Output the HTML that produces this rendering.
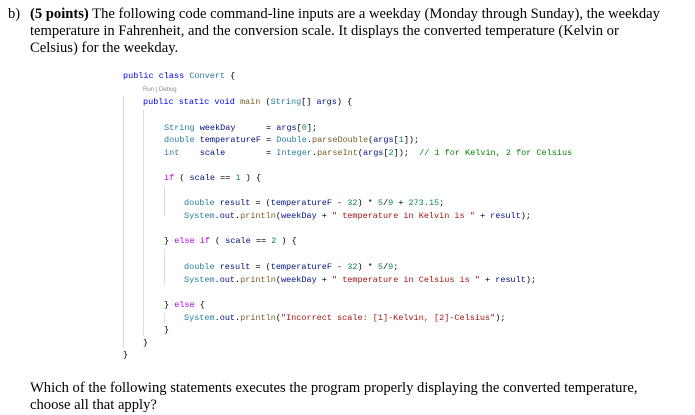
<!DOCTYPE html>
<html><head><meta charset="utf-8"><style>
body{margin:0;width:695px;height:415px;background:#fff;position:relative;overflow:hidden}
.t{position:absolute;font-family:"Liberation Serif",serif;font-size:14.6px;color:#000;white-space:nowrap;line-height:17px}
.c{position:absolute;font-family:"Liberation Mono",monospace;font-size:8.5px;white-space:pre;color:#001080;line-height:10px;font-weight:500}
.g{position:absolute;width:1px;background:#ddd}
.k{color:#0000ff}.ty{color:#267f99}.m{color:#795e26}.n{color:#098658}.s{color:#a31515}.cm{color:#008000}.p{color:#af00db}.o{color:#000}
</style></head><body>
<div class="t" style="left:8px;top:6px">b)</div>
<div class="t" style="left:30px;top:6px"><b>(5 points)</b> The following code command-line inputs are a weekday (Monday through Sunday), the weekday</div>
<div class="t" style="left:30px;top:23px">temperature in Fahrenheit, and the conversion scale. It displays the converted temperature (Kelvin or</div>
<div class="t" style="left:30px;top:40px">Celsius) for the weekday.</div>

<div class="g" style="left:123px;top:96px;height:252px"></div>
<div class="g" style="left:143px;top:110px;height:225px"></div>
<div class="g" style="left:164px;top:186px;height:30px"></div>
<div class="g" style="left:164px;top:249px;height:36px"></div>
<div class="g" style="left:164px;top:313px;height:10px"></div>

<div class="c" style="left:123px;top:71px"><span class="k">public class</span> <span class="ty">Convert</span> <span class="o">{</span></div>
<div class="c" style="left:143px;top:85px;font-family:'Liberation Sans',sans-serif;font-size:6px;color:#888">Run | Debug</div>
<div class="c" style="left:143px;top:97px"><span class="k">public static void</span> <span class="m">main</span> <span class="o">(</span><span class="ty">String</span><span class="o">[]</span> args<span class="o">) {</span></div>
<div class="c" style="left:164px;top:123px"><span class="ty">String</span> weekDay      <span class="o">=</span> args<span class="o">[</span><span class="n">0</span><span class="o">];</span></div>
<div class="c" style="left:164px;top:135px"><span class="ty">double</span> temperatureF <span class="o">=</span> <span class="ty">Double</span><span class="o">.</span><span class="m">parseDouble</span><span class="o">(</span>args<span class="o">[</span><span class="n">1</span><span class="o">]);</span></div>
<div class="c" style="left:164px;top:148px"><span class="ty">int</span>    scale        <span class="o">=</span> <span class="ty">Integer</span><span class="o">.</span><span class="m">parseInt</span><span class="o">(</span>args<span class="o">[</span><span class="n">2</span><span class="o">]);</span>  <span class="cm">// 1 for Kelvin, 2 for Celsius</span></div>
<div class="c" style="left:164px;top:173px"><span class="p">if</span> <span class="o">(</span> scale <span class="o">==</span> <span class="n">1</span> <span class="o">) {</span></div>
<div class="c" style="left:184px;top:198px"><span class="ty">double</span> result <span class="o">= (</span>temperatureF <span class="o">-</span> <span class="n">32</span><span class="o">) *</span> <span class="n">5</span><span class="o">/</span><span class="n">9</span> <span class="o">+</span> <span class="n">273.15</span><span class="o">;</span></div>
<div class="c" style="left:184px;top:211px"><span class="ty">System</span><span class="o">.</span>out<span class="o">.</span><span class="m">println</span><span class="o">(</span>weekDay <span class="o">+</span> <span class="s">" temperature in Kelvin is "</span> <span class="o">+</span> result<span class="o">);</span></div>
<div class="c" style="left:164px;top:236px"><span class="o">}</span> <span class="p">else if</span> <span class="o">(</span> scale <span class="o">==</span> <span class="n">2</span> <span class="o">) {</span></div>
<div class="c" style="left:184px;top:262px"><span class="ty">double</span> result <span class="o">= (</span>temperatureF <span class="o">-</span> <span class="n">32</span><span class="o">) *</span> <span class="n">5</span><span class="o">/</span><span class="n">9</span><span class="o">;</span></div>
<div class="c" style="left:184px;top:275px"><span class="ty">System</span><span class="o">.</span>out<span class="o">.</span><span class="m">println</span><span class="o">(</span>weekDay <span class="o">+</span> <span class="s">" temperature in Celsius is "</span> <span class="o">+</span> result<span class="o">);</span></div>
<div class="c" style="left:164px;top:300px"><span class="o">}</span> <span class="p">else</span> <span class="o">{</span></div>
<div class="c" style="left:184px;top:313px"><span class="ty">System</span><span class="o">.</span>out<span class="o">.</span><span class="m">println</span><span class="o">(</span><span class="s">"Incorrect scale: [1]-Kelvin, [2]-Celsius"</span><span class="o">);</span></div>
<div class="c" style="left:164px;top:325px"><span class="o">}</span></div>
<div class="c" style="left:143px;top:338px"><span class="o">}</span></div>
<div class="c" style="left:123px;top:350px"><span class="o">}</span></div>

<div class="t" style="left:30px;top:380px">Which of the following statements executes the program properly displaying the converted temperature,</div>
<div class="t" style="left:30px;top:397px">choose all that apply?</div>
</body></html>
